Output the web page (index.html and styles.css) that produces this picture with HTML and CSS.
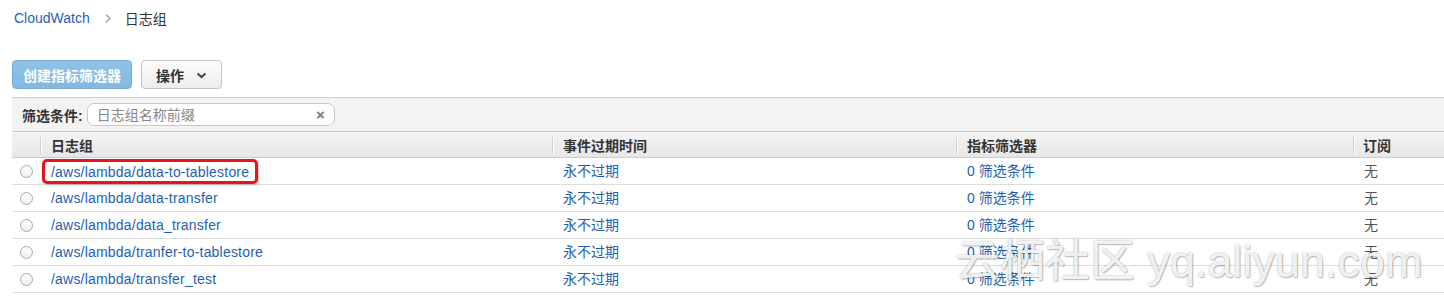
FILE: index.html
```html
<!DOCTYPE html>
<html lang="zh-CN">
<head>
  <meta charset="UTF-8">
  <meta name="viewport" content="width=device-width, initial-scale=1.0">
  <title>CloudWatch - 日志组</title>
  <link rel="stylesheet" href="styles.css">
</head>
<body>
  <!-- Breadcrumb -->
  <div class="crumbs">
    <a href="#" class="crumb-link">CloudWatch</a>
    <svg class="crumb-sep" width="6" height="9" viewBox="0 0 6 9"><polyline points="1,0.5 5,4.5 1,8.5" fill="none" stroke="#9a9a9a" stroke-width="1.1"/></svg>
    <span class="crumb-current">日志组</span>
  </div>

  <!-- Toolbar -->
  <div class="toolbar">
    <button type="button" class="btn btn-primary" disabled>创建指标筛选器</button>
    <button type="button" class="btn btn-default">操作
      <svg class="caret" width="11" height="7" viewBox="0 0 11 7"><polyline points="1.5,1.5 5.5,5 9.5,1.5" fill="none" stroke="#444" stroke-width="2.2"/></svg>
    </button>
  </div>

  <!-- Log groups -->
  <div class="panel">
    <div class="filter-bar">
      <label for="prefix">筛选条件:</label>
      <div class="search">
        <input type="text" id="prefix" placeholder="日志组名称前缀">
        <span class="clear">×</span>
      </div>
    </div>
    <table class="groups">
      <thead>
        <tr>
          <th class="col-check"></th>
          <th class="col-name">日志组</th>
          <th class="col-expire">事件过期时间</th>
          <th class="col-filter">指标筛选器</th>
          <th class="col-sub">订阅</th>
        </tr>
      </thead>
      <tbody>
        <tr>
          <td class="col-check"><span class="radio"></span></td>
          <td class="name"><span class="highlight"><a href="#">/aws/lambda/data-to-tablestore</a></span></td>
          <td><a href="#">永不过期</a></td>
          <td><a href="#">0 筛选条件</a></td>
          <td class="muted">无</td>
        </tr>
        <tr>
          <td class="col-check"><span class="radio"></span></td>
          <td class="name"><a href="#">/aws/lambda/data-transfer</a></td>
          <td><a href="#">永不过期</a></td>
          <td><a href="#">0 筛选条件</a></td>
          <td class="muted">无</td>
        </tr>
        <tr>
          <td class="col-check"><span class="radio"></span></td>
          <td class="name"><a href="#">/aws/lambda/data_transfer</a></td>
          <td><a href="#">永不过期</a></td>
          <td><a href="#">0 筛选条件</a></td>
          <td class="muted">无</td>
        </tr>
        <tr>
          <td class="col-check"><span class="radio"></span></td>
          <td class="name"><a href="#">/aws/lambda/tranfer-to-tablestore</a></td>
          <td><a href="#">永不过期</a></td>
          <td><a href="#">0 筛选条件</a></td>
          <td class="muted">无</td>
        </tr>
        <tr>
          <td class="col-check"><span class="radio"></span></td>
          <td class="name"><a href="#">/aws/lambda/transfer_test</a></td>
          <td><a href="#">永不过期</a></td>
          <td><a href="#">0 筛选条件</a></td>
          <td class="muted">无</td>
        </tr>
      </tbody>
    </table>
  </div>

  <div class="watermark">云栖社区 yq.aliyun.com</div>
</body>
</html>
```

FILE: styles.css
```css
body {
  margin: 0;
  padding: 0 0 0 12px;
  font-family: "Liberation Sans", "Noto Sans CJK SC", Arial, sans-serif;
  font-size: 14px;
  color: #333;
  background: #fff;
  position: relative;
  overflow: hidden;
}
a {
  color: #1f5fb3;
  text-decoration: none;
}

/* breadcrumb */
.crumbs {
  display: flex;
  align-items: center;
  height: 36px;
  padding-left: 2px;
}
.crumb-sep {
  margin: 0 14px 0 15px;
}
.crumb-current {
  color: #333;
}

/* toolbar */
.toolbar {
  display: flex;
  gap: 9px;
  margin-top: 24px;
}
.btn {
  box-sizing: border-box;
  height: 29px;
  padding: 0 10px;
  font-family: inherit;
  font-size: 14px;
  font-weight: bold;
  white-space: nowrap;
  border-radius: 4px;
  display: flex;
  align-items: center;
}
.btn-primary {
  width: 120px;
  padding: 0;
  color: #fff;
  background: linear-gradient(#91c3e8, #82b8e2);
  border: 1px solid #78acd6;
  justify-content: center;
}
.btn-default {
  width: 81px;
  padding: 0 14px;
  color: #333;
  background: linear-gradient(#fdfdfd, #ececec);
  border: 1px solid #c6c6c6;
  justify-content: space-between;
}
.caret {
  margin-top: 1px;
}

/* panel */
.panel {
  margin-top: 8px;
  border-top: 1px solid #cfcfcf;
}
.filter-bar {
  display: flex;
  align-items: center;
  height: 33px;
  padding-left: 10px;
  background: #f3f3f3;
  border-bottom: 1px solid #cdcdcd;
}
.filter-bar label {
  font-weight: bold;
  color: #333;
  margin-right: 4px;
}
.search {
  display: flex;
  align-items: center;
  width: 248px;
  height: 23px;
  box-sizing: border-box;
  border: 1px solid #c8c8c8;
  border-radius: 7px;
  background: #fff;
}
.search input {
  flex: 1;
  min-width: 0;
  border: none;
  outline: none;
  background: transparent;
  padding: 0 0 0 9px;
  font-family: inherit;
  font-size: 14px;
}
.search input::placeholder {
  color: #888;
}
.clear {
  color: #777;
  font-size: 15px;
  font-weight: bold;
  margin-right: 9px;
}

/* table */
.groups {
  width: 100%;
  border-collapse: collapse;
  table-layout: fixed;
}
.groups th {
  position: relative;
  height: 25px;
  padding: 0 0 0 11px;
  text-align: left;
  font-weight: bold;
  color: #333;
  background: linear-gradient(#f4f4f4, #e7e7e7);
  border-bottom: 1px solid #cccccc;
}
.groups th + th::before {
  content: "";
  position: absolute;
  left: 0;
  top: 5px;
  bottom: 3px;
  border-left: 1px solid #cfcfcf;
  box-shadow: 1px 0 0 #fff;
}
.groups td {
  height: 26px;
  padding: 0 0 0 11px;
  border-bottom: 1px solid #dcdcdc;
  line-height: 16px;
  white-space: nowrap;
}
.groups .col-check {
  width: 28px;
  padding: 0;
  text-align: center;
}
.col-name { width: 501px; }
.col-expire { width: 393px; }
.col-filter { width: 386px; }
.groups td.col-sub,
.groups th.col-sub {
  padding-left: 10px;
}
.name a {
  letter-spacing: 0.2px;
}
.muted {
  color: #555;
}
.radio {
  display: inline-block;
  width: 11px;
  height: 11px;
  margin: 4px 0 0 0;
  border: 1px solid #a9a9a9;
  border-radius: 50%;
  background: linear-gradient(#fff, #eee);
}
.highlight {
  display: inline-block;
  margin: 0 -9px;
  padding: 2px 6px 1px;
  border: 3px solid #e8141b;
  border-radius: 5px;
  box-shadow: 1px 1px 2px rgba(0, 0, 0, 0.25);
}

/* watermark */
.watermark {
  position: absolute;
  left: 955px;
  top: 234px;
  font-size: 45px;
  line-height: 56px;
  white-space: nowrap;
  color: rgba(255, 255, 255, 0.9);
  text-shadow: 0 0 2px rgba(0, 0, 0, 0.35), 1px 1px 1px rgba(0, 0, 0, 0.2);
  pointer-events: none;
}
```
